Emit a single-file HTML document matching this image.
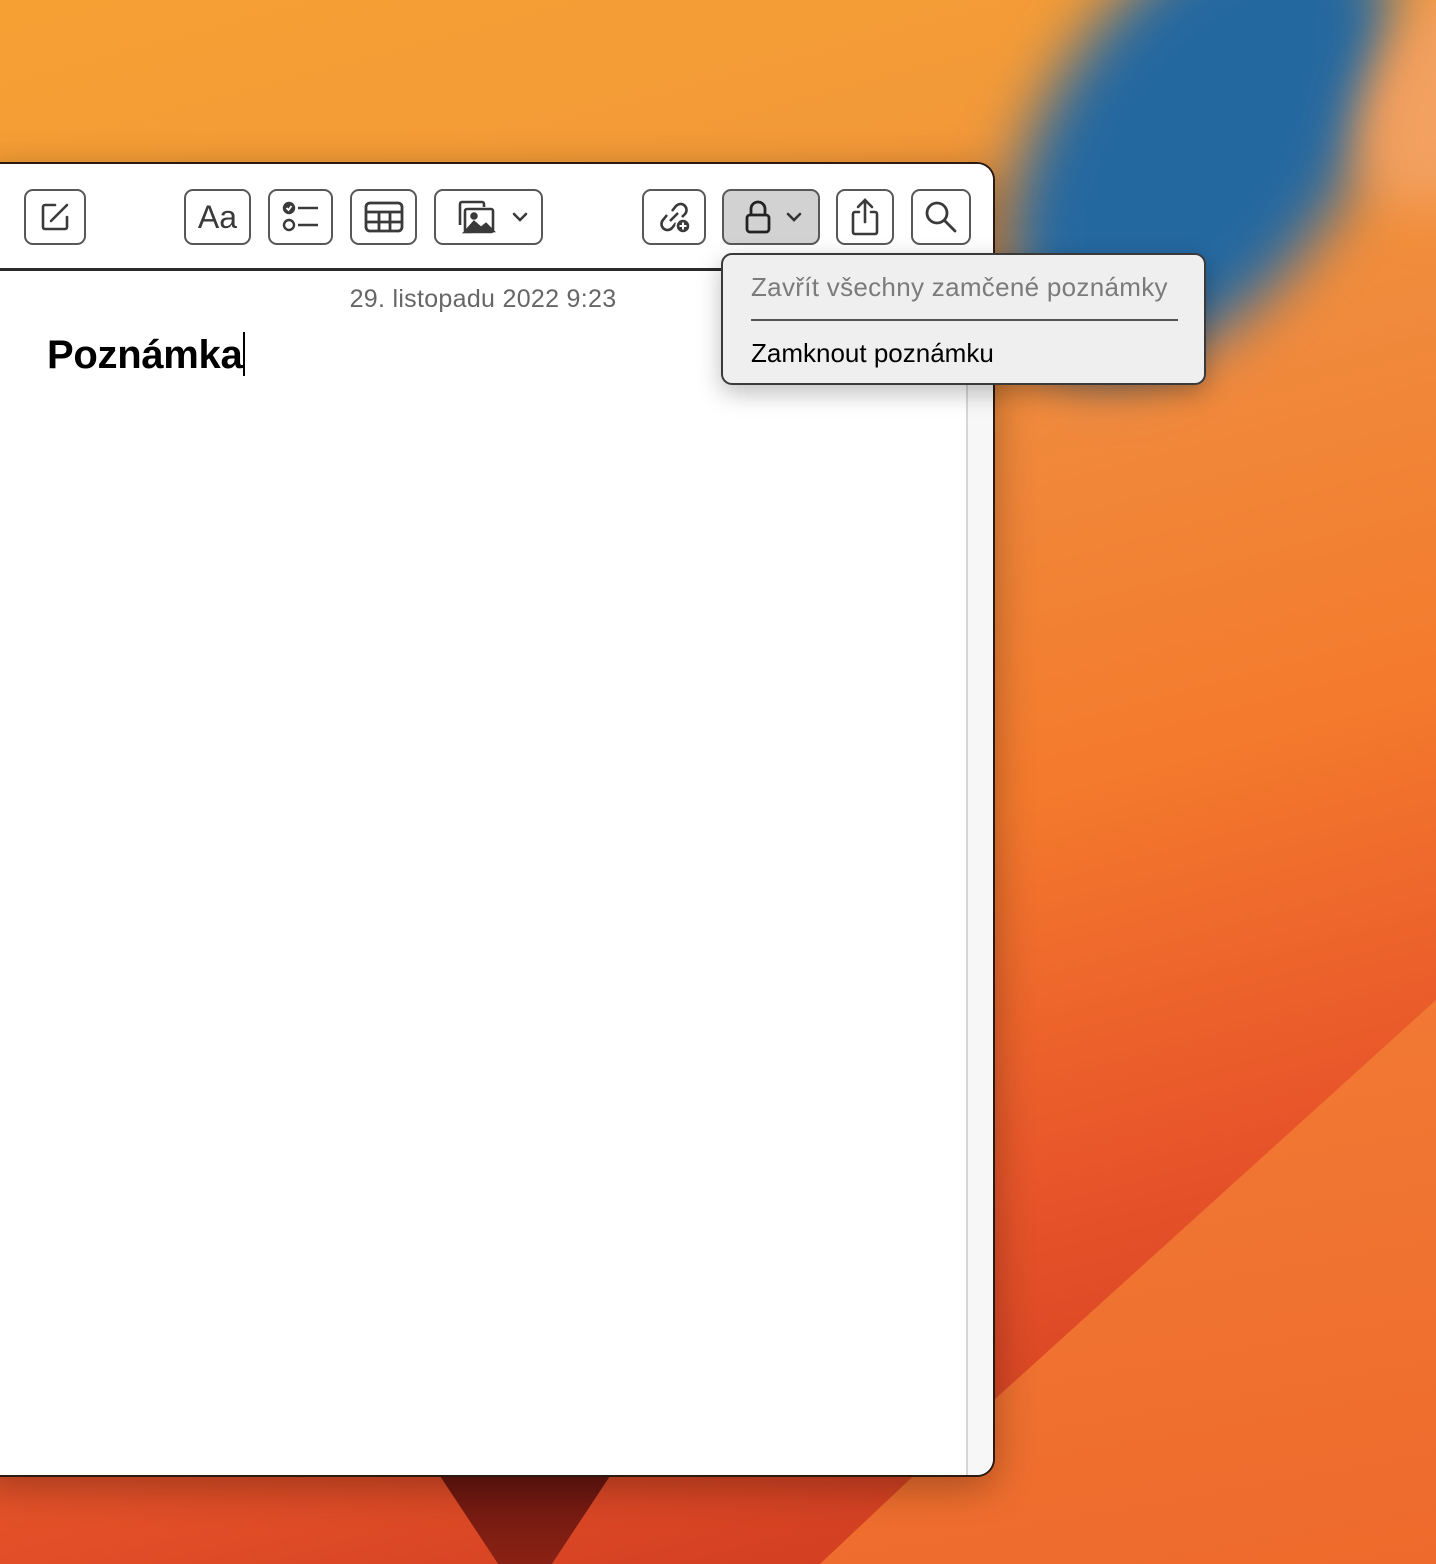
<!DOCTYPE html>
<html style="background:#e05a28"><head><meta charset="utf-8"><style>
*{margin:0;padding:0;box-sizing:border-box}
html,body{width:1436px;height:1564px;overflow:hidden}
body{position:relative;font-family:"Liberation Sans",sans-serif;background:none}
.bg{position:absolute;left:0;top:0;width:1436px;height:1564px;overflow:hidden;
background:linear-gradient(165deg,#f6a033 0%,#f39a38 18%,#f08a3c 35%,#f47a2d 55%,#e8552a 75%,#c8341e 100%);}
.blue{position:absolute;left:1050px;top:-120px;width:300px;height:520px;border-radius:50%;transform:rotate(35deg);filter:blur(30px);
background:#2468a0}
.tr{position:absolute;left:1380px;top:-40px;width:160px;height:260px;border-radius:50%;background:#f3a060;filter:blur(25px);transform:rotate(35deg)}
.wedge{position:absolute;left:0;top:0;width:1436px;height:1564px;background:linear-gradient(170deg,#f99a45,#ee6a2c);clip-path:polygon(1436px 1000px,1436px 1564px,820px 1564px,994px 1400px)}
.dark{position:absolute;left:440px;top:1476px;width:170px;height:90px;background:linear-gradient(180deg,#6a1610,#8a2214);clip-path:polygon(0 0,100% 0,65% 100%,35% 100%)}
.win{position:absolute;left:-20px;top:162px;width:1015px;height:1315px;background:#fff;border:2px solid #2a1a12;border-radius:18px;overflow:hidden;box-shadow:0 10px 40px rgba(0,0,0,.3)}
.tb{position:absolute;left:0;top:0;right:0;height:107px;border-bottom:3px solid #2b2b2b;background:#fff}
.side{position:absolute;left:984px;top:107px;width:31px;bottom:0;background:#f7f7f7;border-left:2px solid #d6d6d6}
.btn{position:absolute;top:25px;height:56px;border:2px solid #585858;border-radius:9px;display:flex;align-items:center;justify-content:center;color:#3a3a3a}
.date{position:absolute;left:0;width:1002px;top:121px;text-align:center;font-size:25px;color:#666;letter-spacing:.3px}
.title{position:absolute;left:65px;top:168px;font-size:40px;font-weight:bold;color:#000;letter-spacing:-.3px}
.cur{display:inline-block;width:2px;height:44px;background:#000;vertical-align:-8px;margin-left:1px}
.menu{position:absolute;left:721px;top:253px;width:485px;height:132px;background:#efefef;border:2px solid #3a3a3a;border-radius:11px;box-shadow:0 8px 24px rgba(0,0,0,.25)}
.m1{position:absolute;left:28px;top:17px;font-size:26px;color:#7b7b7b;letter-spacing:.3px}
.sep{position:absolute;left:28px;top:64px;width:427px;height:2px;background:#555}
.m2{position:absolute;left:28px;top:83px;font-size:26px;color:#000}
</style></head><body>
<div class="bg"><div class="blue"></div><div class="tr"></div><div class="wedge"></div><div class="dark"></div></div>
<div class="win">
 <div class="tb">
  <div class="btn" style="left:42px;width:62px"><svg width="34" height="34" viewBox="0 0 34 34" fill="none" stroke="#3a3a3a" stroke-width="2.6" stroke-linecap="round"><path d="M17 5H7a2 2 0 0 0-2 2v20a2 2 0 0 0 2 2h20a2 2 0 0 0 2-2V17"/><path d="M13 21l16-16"/></svg></div>
  <div class="btn" style="left:202px;width:67px;font-size:32px">Aa</div>
  <div class="btn" style="left:286px;width:65px"><svg width="40" height="34" viewBox="0 0 40 34" fill="none" stroke="#3a3a3a" stroke-width="2.4"><circle cx="8" cy="8" r="5" fill="#3a3a3a"/><path d="M5.5 8l2 2 3-4" stroke="#fff" stroke-width="1.8"/><circle cx="8" cy="25" r="5"/><path d="M17 8h20M17 25h20"/></svg></div>
  <div class="btn" style="left:368px;width:67px"><svg width="40" height="32" viewBox="0 0 40 32" fill="none" stroke="#3a3a3a" stroke-width="2.8"><rect x="2" y="2" width="36" height="28" rx="4"/><path d="M2 11h36M2 21h36M15 11v19M26 11v19"/></svg></div>
  <div class="btn" style="left:452px;width:109px;justify-content:flex-start;padding-left:18px"><svg width="44" height="36" viewBox="0 0 44 36" fill="none" stroke="#3a3a3a" stroke-width="2.6"><path d="M6 26V5a2 2 0 0 1 2-2h20a2 2 0 0 1 2 2v3"/><rect x="11" y="10" width="28" height="23" rx="2" fill="#fff"/><path d="M11 33l9-10 7 6 5-4 7 7z" fill="#3a3a3a"/><circle cx="20" cy="17" r="2.5" fill="#3a3a3a"/></svg><svg style="margin-left:14px" width="16" height="12" viewBox="0 0 16 12" fill="none" stroke="#3a3a3a" stroke-width="2.6" stroke-linecap="round"><path d="M2 3l6 6 6-6"/></svg></div>
  <div class="btn" style="left:660px;width:64px"><svg width="40" height="40" viewBox="0 0 40 40" fill="none" stroke="#3a3a3a" stroke-width="2.6"><path d="M18 14l4-5a6 6 0 0 1 9 8l-3 3"/><path d="M22 26l-4 5a6 6 0 0 1-9-8l4-5"/><path d="M16 24l8-8"/><circle cx="29" cy="29" r="7" fill="#3a3a3a" stroke="#fff" stroke-width="1.5"/><path d="M29 25.5v7M25.5 29h7" stroke="#fff" stroke-width="2"/></svg></div>
  <div class="btn" style="left:740px;width:98px;background:#d2d2d2;justify-content:flex-start;padding-left:20px"><svg width="28" height="36" viewBox="0 0 28 36" fill="none" stroke="#222" stroke-width="2.8"><path d="M7 16V10a7 7 0 0 1 14 0v6"/><rect x="3" y="16" width="22" height="17" rx="3"/></svg><svg style="margin-left:14px" width="16" height="12" viewBox="0 0 16 12" fill="none" stroke="#333" stroke-width="2.6" stroke-linecap="round"><path d="M2 3l6 6 6-6"/></svg></div>
  <div class="btn" style="left:854px;width:58px"><svg width="34" height="40" viewBox="0 0 34 40" fill="none" stroke="#3a3a3a" stroke-width="2.6" stroke-linecap="round"><path d="M17 3v22M10 10l7-7 7 7"/><path d="M11 15H7a2 2 0 0 0-2 2v18a2 2 0 0 0 2 2h20a2 2 0 0 0 2-2V17a2 2 0 0 0-2-2h-4"/></svg></div>
  <div class="btn" style="left:929px;width:60px"><svg width="36" height="36" viewBox="0 0 36 36" fill="none" stroke="#3a3a3a" stroke-width="2.8" stroke-linecap="round"><circle cx="14" cy="14" r="10"/><path d="M22 22l10 10"/></svg></div>
 </div>
 <div class="side"></div>
 <div class="date">29. listopadu 2022 9:23</div>
 <div class="title">Poznámka<span class="cur"></span></div>
</div>
<div class="menu">
 <div class="m1">Zavřít všechny zamčené poznámky</div>
 <div class="sep"></div>
 <div class="m2">Zamknout poznámku</div>
</div>
</body></html>
